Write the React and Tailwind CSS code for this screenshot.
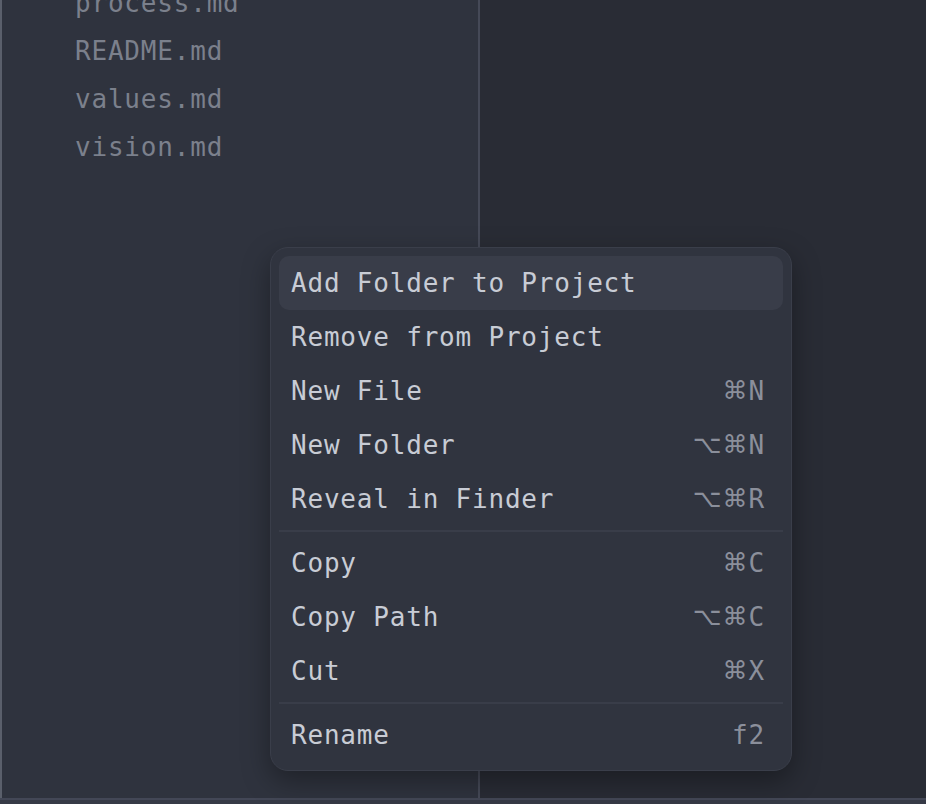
const files = ['process.md', 'README.md', 'values.md', 'vision.md']

const menu = [
  [
    { label: 'Add Folder to Project', active: true },
    { label: 'Remove from Project' },
    { label: 'New File', keys: '⌘N' },
    { label: 'New Folder', keys: '⌥⌘N' },
    { label: 'Reveal in Finder', keys: '⌥⌘R' },
  ],
  [
    { label: 'Copy', keys: '⌘C' },
    { label: 'Copy Path', keys: '⌥⌘C' },
    { label: 'Cut', keys: '⌘X' },
  ],
  [{ label: 'Rename', keys: 'f2' }],
]

function Keys({ keys }) {
  // modifier symbols are wider in the reference than the mono font's glyphs
  return (
    <span className="flex items-center text-[#8b8f9b]">
      {keys.split('').map((k, i) =>
        k === '⌘' || k === '⌥' ? (
          <span key={i} className="font-['DejaVu_Sans',sans-serif] text-[25px] tracking-[1px]">{k}</span>
        ) : (
          <span key={i}>{k}</span>
        )
      )}
    </span>
  )
}

function ContextMenu() {
  return (
    <div className="absolute left-[270px] top-[247px] w-[522px] rounded-[18px] border border-[#3a3e4a] bg-[#30343f] p-2 shadow-[0_10px_28px_rgba(0,0,0,0.35)]">
      {menu.map((group, gi) => (
        <div key={gi}>
          {gi > 0 && <div className="my-1 h-[2px] bg-[#393d49]" />}
          {group.map(item => (
            <div
              key={item.label}
              className={`flex h-[54px] items-center justify-between rounded-[10px] pl-3 pr-[18px] ${item.active ? 'bg-[#393d49]' : ''}`}
            >
              <span className="text-[#c8ccd5]">{item.label}</span>
              {item.keys && <Keys keys={item.keys} />}
            </div>
          ))}
        </div>
      ))}
    </div>
  )
}

export default function App() {
  return (
    <div className="relative flex h-[804px] w-full flex-col overflow-hidden bg-[#292c35] font-['DejaVu_Sans_Mono',monospace] text-[26px] tracking-[0.8px]">
      <div className="flex min-h-0 flex-1">
        <div className="w-[2px] bg-[#5a5f6b]" />
        <aside className="w-[476px] overflow-hidden bg-[#2f333e] pl-[73px]">
          <ul className="-mt-[21px]">
            {files.map(f => (
              <li key={f} className="h-[48px] leading-[48px] text-[#7b808c]">{f}</li>
            ))}
          </ul>
        </aside>
        <div className="w-[2px] bg-[#454957]" />
        <main className="flex-1 bg-[#292c35]" />
      </div>
      <div className="h-[6px] border-t-2 border-[#434756] bg-[#363a46]" />
      <ContextMenu />
    </div>
  )
}
